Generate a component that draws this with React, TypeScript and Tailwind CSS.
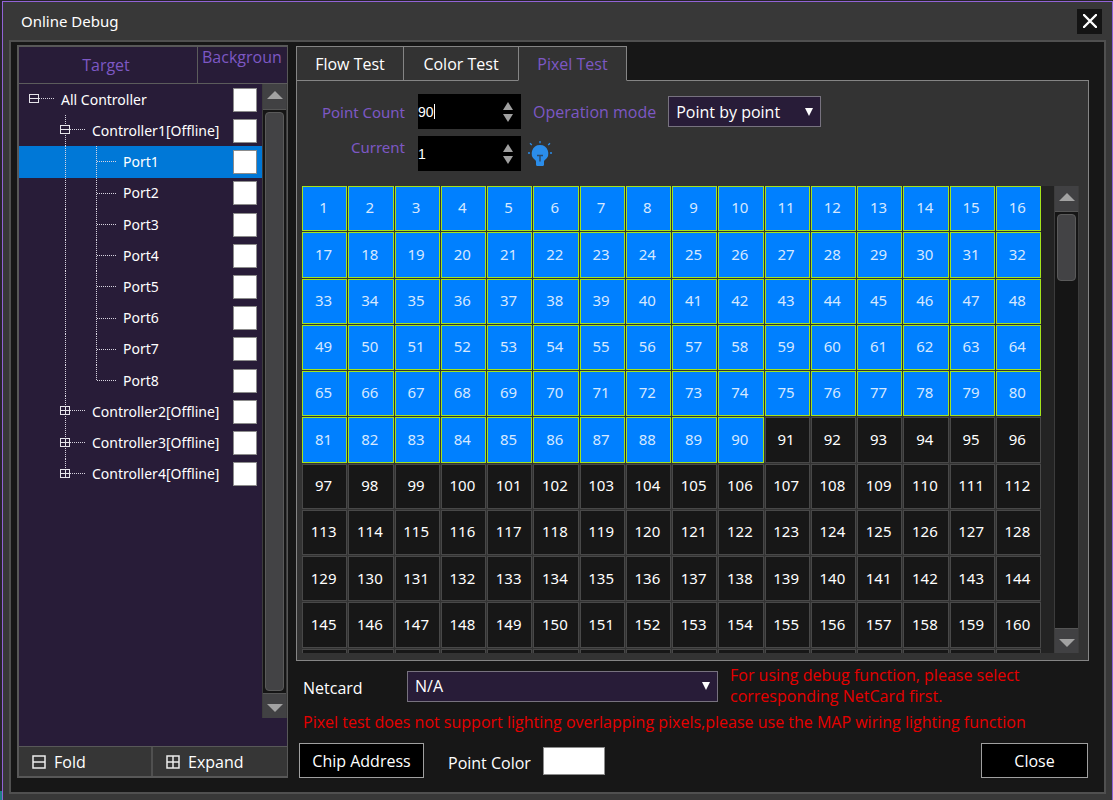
import React, { useState } from 'react';

type TreeRow = {
  label: string;
  level: 0 | 1 | 2;
  open?: boolean;
  last?: boolean;
};

const treeRows: TreeRow[] = [
  { label: 'All Controller', level: 0, open: true },
  { label: 'Controller1[Offline]', level: 1, open: true },
  ...Array.from({ length: 8 }, (_, i) => ({
    label: `Port${i + 1}`,
    level: 2 as const,
    last: i === 7,
  })),
  { label: 'Controller2[Offline]', level: 1 },
  { label: 'Controller3[Offline]', level: 1 },
  { label: 'Controller4[Offline]', level: 1, last: true },
];

const tabs = [
  { label: 'Flow Test', width: 'w-[108px]' },
  { label: 'Color Test', width: 'w-[116px]' },
  { label: 'Pixel Test', width: 'w-[109px]' },
];

const TOTAL_POINTS = 176;
const LABELLED_POINTS = 160;

// Dotted guide lines and the +/- box in front of a tree label
const TreeLines: React.FC<{ row: TreeRow; first: boolean }> = ({ row, first }) => {
  const dots = { stroke: '#d8d4e0', strokeDasharray: '1 1' };
  const widths = ['w-[42px]', 'w-[73px]', 'w-[104px]'];
  const boxX = row.level === 0 ? 11 : 42;

  return (
    <svg
      className={`${widths[row.level]} h-full shrink-0`}
      shapeRendering="crispEdges"
      aria-hidden="true"
    >
      {row.level > 0 && (
        <line x1="46.5" x2="46.5" y1="0" y2={row.level === 1 && row.last ? '50%' : '100%'} {...dots} />
      )}
      {row.level === 2 && (
        <>
          <line x1="77.5" x2="77.5" y1="0" y2={row.last ? '50%' : '100%'} {...dots} />
          <line x1="78" x2="98" y1="15.5" y2="15.5" {...dots} />
        </>
      )}
      {row.level < 2 && (
        <>
          <line x1={boxX + 9} x2={boxX + 24} y1="14.5" y2="14.5" {...dots} />
          <rect x={boxX - 0.5} y="10.5" width="9" height="8" fill="#281c38" stroke="#e6e4ea" />
          <line x1={boxX} x2={boxX + 9} y1="14.5" y2="14.5" stroke="#e6e4ea" />
          {!row.open && !first && (
            <line x1={boxX + 4.5} x2={boxX + 4.5} y1="10" y2="19" stroke="#e6e4ea" />
          )}
        </>
      )}
    </svg>
  );
};

const Triangle: React.FC<{ down?: boolean; className: string }> = ({ down, className }) => (
  <svg viewBox="0 0 16 8" className={className} preserveAspectRatio="none" aria-hidden="true">
    <path d={down ? 'M0 0h16L8 8z' : 'M0 8h16L8 0z'} fill="currentColor" />
  </svg>
);

const ScrollBar: React.FC<{ thumb: string }> = ({ thumb }) => (
  <div className="flex w-[25px] shrink-0 flex-col border-x border-[#3c3c3c] bg-[#151515]">
    <button
      type="button"
      aria-label="Scroll up"
      className="flex h-[26px] shrink-0 items-center justify-center border-b border-[#555] bg-[#414143] pb-1 text-[#a2a2a2]"
    >
      <Triangle className="h-2 w-4" />
    </button>
    <div className="flex min-h-0 flex-1 flex-col px-0.5 py-0.5">
      <div className={`rounded-sm border border-[#5a5a5a] bg-[#434345] ${thumb}`} />
    </div>
    <button
      type="button"
      aria-label="Scroll down"
      className="flex h-[25px] shrink-0 items-center justify-center border-t border-[#555] bg-[#414143] pt-1 text-[#a2a2a2]"
    >
      <Triangle down className="h-2 w-4" />
    </button>
  </div>
);

const NumberBox: React.FC<{
  id: string;
  value: string;
  caret?: boolean;
  onChange: (value: string) => void;
}> = ({ id, value, caret, onChange }) => (
  <div className="relative flex h-[35px] w-[103px] items-center bg-black pr-2">
    <input
      id={id}
      type="text"
      value={value}
      onChange={(e) => onChange(e.target.value)}
      className="h-full w-full min-w-0 flex-1 bg-transparent font-['Liberation_Sans',sans-serif] text-sm text-white outline-none"
    />
    {caret && <span className="absolute top-2.5 left-4 h-[15px] w-px bg-white" />}
    <div className="flex flex-col gap-1 text-[#a0a0a0]">
      <button type="button" aria-label="Increase" onClick={() => onChange(String(Number(value) + 1))}>
        <Triangle className="h-2 w-2.5" />
      </button>
      <button type="button" aria-label="Decrease" onClick={() => onChange(String(Number(value) - 1))}>
        <Triangle down className="h-2 w-2.5" />
      </button>
    </div>
  </div>
);

const SelectBox: React.FC<{ id: string; options: string[]; className: string }> = ({
  id,
  options,
  className,
}) => (
  <div className={`relative ${className}`}>
    <select
      id={id}
      className="h-[31px] w-full appearance-none border border-[#77727f] bg-[#281c38] pl-[7px] text-base text-white outline-none"
    >
      {options.map((option) => (
        <option key={option}>{option}</option>
      ))}
    </select>
    <span className="pointer-events-none absolute inset-y-0 right-2 flex items-center text-white">
      <Triangle down className="h-2 w-2" />
    </span>
  </div>
);

const BulbIcon: React.FC = () => (
  <svg viewBox="0 0 24 26" className="h-[26px] w-6" aria-hidden="true">
    <path
      d="M12 4a8.300 8.300 0 0 0-4.900 15c.7.500.9 1.100.9 1.800v2.700c0 .9.500 1.500 1.400 1.500h5.200c.9 0 1.400-.6 1.400-1.500v-2.700c0-.7.2-1.300.9-1.800A8.300 8.300 0 0 0 12 4z"
      fill="#2b8dea"
    />
    <path d="M9 14.500h6M12 14.500v6" stroke="#2d4a68" strokeWidth="1.400" />
    <path
      d="M12 0v2.200M2 2.200l1.800 1.800M22 2.200l-1.800 1.800M0 12h2M22 12h2"
      stroke="#2b8dea"
      strokeWidth="1.300"
    />
  </svg>
);

const BoxIcon: React.FC<{ plus?: boolean }> = ({ plus }) => (
  <svg viewBox="0 0 14 14" className="h-3.5 w-3.5" fill="none" stroke="#ececec" aria-hidden="true">
    <rect x="1" y="1" width="12" height="12" strokeWidth="1.500" />
    <path d={plus ? 'M1 7h12M7 1v12' : 'M1 7h12'} strokeWidth="1.500" />
  </svg>
);

const TargetPanel: React.FC = () => {
  const [selected, setSelected] = useState('Port1');

  return (
    <aside className="flex w-[271px] shrink-0 flex-col border-2 border-r border-[#585858] bg-[#281c38]">
      <div className="flex h-[37px] border-b border-[#5c5c5c] text-base leading-5 text-[#7d58c4]">
        <div className="flex w-[179px] items-center justify-center border-r border-[#5c5c5c] pr-1">
          Target
        </div>
        <div className="flex-1 pl-1">Backgroun</div>
      </div>
      <div className="flex min-h-0 flex-1 pb-7">
        <ul className="grid h-[406px] min-w-0 flex-1 grid-rows-[repeat(13,minmax(0,1fr))]">
          {treeRows.map((row, idx) => (
            <li
              key={row.label}
              onClick={() => setSelected(row.label)}
              className={`flex min-h-0 items-center pr-[5px] font-['Noto_Sans',sans-serif] text-sm text-white ${
                row.label === selected ? 'bg-[#0078d7]' : ''
              }`}
            >
              <TreeLines row={row} first={idx === 0} />
              <label htmlFor={`bg-${idx}`} className="flex-1 whitespace-nowrap">
                {row.label}
              </label>
              <input
                id={`bg-${idx}`}
                type="checkbox"
                className="h-6 w-6 shrink-0 appearance-none border border-[#8c8c8c] bg-white"
              />
            </li>
          ))}
        </ul>
        <ScrollBar thumb="flex-1" />
      </div>
      <div className="flex h-[30px] border-t border-[#585858] bg-[#363636] text-base text-white">
        <button type="button" className="flex w-[134px] items-center gap-2 border-r-2 border-[#505050] pl-[13px]">
          <BoxIcon />
          Fold
        </button>
        <button type="button" className="flex flex-1 items-center gap-2 pl-[13px]">
          <BoxIcon plus />
          Expand
        </button>
      </div>
    </aside>
  );
};

const PixelTest: React.FC = () => {
  const [count, setCount] = useState('90');
  const [current, setCurrent] = useState('1');

  return (
    <div className="-mt-px border border-[#858585] bg-[#333] pt-[13px] pr-[9px] pb-[7px] pl-[5px]">
      <div className="grid grid-cols-[103px_auto_1fr] items-start gap-x-[13px] text-base text-[#7d58c4]">
        <label htmlFor="count" className="pt-2 text-right font-['Noto_Sans',sans-serif] text-[15px] leading-5">
          Point Count
        </label>
        <NumberBox id="count" value={count} caret onChange={setCount} />
        <div className="flex items-center gap-3 pt-0.5">
          <label htmlFor="mode" className="-ml-px">
            Operation mode
          </label>
          <SelectBox id="mode" options={['Point by point', 'All points']} className="w-[153px]" />
        </div>
        <label htmlFor="current" className="pt-2 text-right font-['Noto_Sans',sans-serif] text-[15px] leading-5">
          Current
        </label>
        <div className="pt-[7px]">
          <NumberBox id="current" value={current} onChange={setCurrent} />
        </div>
        <button type="button" aria-label="Light" className="-ml-1.5 w-6 pt-3">
          <BulbIcon />
        </button>
      </div>
      <div className="mt-[15px] flex h-[467px] overflow-hidden bg-[#232323]">
        <div className="grid h-[508px] flex-1 grid-cols-[repeat(16,minmax(0,1fr))] grid-rows-[repeat(11,minmax(0,1fr))] gap-px bg-[#333] font-['Noto_Sans',sans-serif] text-[15px]">
          {Array.from({ length: TOTAL_POINTS }, (_, i) => i + 1).map((n) => (
            <button
              type="button"
              key={n}
              aria-label={`Point ${n}`}
              className={
                n <= Number(count)
                  ? 'border border-[#a4e41c] bg-[#0080ff] pr-0.5 pb-0.5 text-[#d6e8ff]'
                  : 'border border-[#484848] bg-[#171717] pr-0.5 pb-0.5 text-white'
              }
            >
              {n <= LABELLED_POINTS && n}
            </button>
          ))}
        </div>
        <div className="flex pl-[13px]">
          <ScrollBar thumb="h-[67px]" />
        </div>
      </div>
    </div>
  );
};

export default function App() {
  const [active, setActive] = useState('Pixel Test');

  return (
    <div className="flex min-h-screen bg-[#26242a] pt-px font-['Open_Sans','Noto_Sans',sans-serif]">
      <div className="flex w-0.5 flex-col justify-end">
        <div className="h-2.5 bg-[#1f7f86]" />
      </div>
      <main className="flex min-w-0 flex-1 flex-col border border-[#9163d6] bg-[#383838] px-1.5 pb-1.5">
        <header className="flex h-[38px] items-center justify-between pr-1 pl-3 text-white">
          <h1 className="font-['Noto_Sans',sans-serif] text-[15px]">Online Debug</h1>
          <button
            type="button"
            aria-label="Close window"
            className="flex h-[25px] w-[25px] items-center justify-center bg-[#141414]"
          >
            <svg viewBox="0 0 14 14" className="h-3.5 w-3.5" aria-hidden="true">
              <path d="M1 1l12 12M13 1L1 13" stroke="white" strokeWidth="2.400" strokeLinecap="round" />
            </svg>
          </button>
        </header>

        <div className="flex flex-1 gap-2 border-2 border-[#505050] bg-[#171717] pt-[3px] pr-[15px] pb-3.5 pl-1.5">
          <TargetPanel />

          <section className="flex min-w-0 flex-1 flex-col">
            <div role="tablist" className="flex pt-px">
              {tabs.map((tab) => (
                <button
                  type="button"
                  role="tab"
                  key={tab.label}
                  aria-selected={tab.label === active}
                  onClick={() => setActive(tab.label)}
                  className={`-mr-px h-[35px] border bg-[#333] text-base ${tab.width} ${
                    tab.label === active
                      ? 'relative border-[#858585] border-b-[#333] text-[#7d58c4]'
                      : 'border-[#858585] text-white'
                  }`}
                >
                  {tab.label}
                </button>
              ))}
            </div>

            <PixelTest />

            <div className="flex items-center pt-1 pl-[7px] text-base text-white">
              <label htmlFor="netcard" className="w-[104px] pt-1">
                Netcard
              </label>
              <SelectBox id="netcard" options={['N/A']} className="w-[311px]" />
              <p className="w-[310px] pl-3 leading-[21px] text-[#e60000]">
                For using debug function, please select corresponding NetCard first.
              </p>
            </div>
            <p className="pt-1 pl-[7px] text-base leading-[22px] text-[#e60000]">
              Pixel test does not support lighting overlapping pixels,please use the MAP wiring lighting function
            </p>
            <div className="flex items-center pt-2.5 pr-px pl-[3px] text-base text-white">
              <button type="button" className="h-[35px] w-[125px] border border-[#a0a0a0] bg-black">
                Chip Address
              </button>
              <label htmlFor="point-color" className="pt-1 pl-6">
                Point Color
              </label>
              <div className="pl-3">
                <button
                  type="button"
                  id="point-color"
                  aria-label="Point Color"
                  className="block h-7 w-[62px] border border-[#8c8c8c] bg-white"
                />
              </div>
              <button type="button" className="ml-auto h-[35px] w-[107px] border border-[#a0a0a0] bg-black">
                Close
              </button>
            </div>
          </section>
        </div>
      </main>
    </div>
  );
}
